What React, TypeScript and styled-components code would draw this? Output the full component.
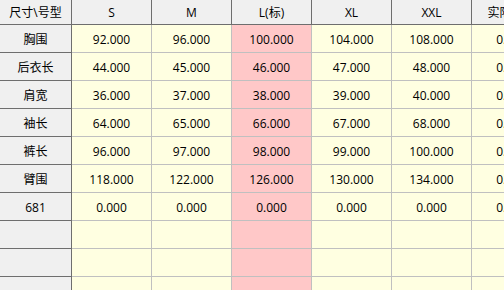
import React from "react";
import styled, { createGlobalStyle } from "styled-components";

const Global = createGlobalStyle`
  html, body { margin: 0; padding: 0; background: #ffffff; overflow: hidden; }
  body { font-family: "Open Sans", "Noto Sans CJK SC", sans-serif; }
`;

const Grid = styled.div`
  display: grid;
  grid-template-columns: 72px repeat(6, 80px);
  grid-auto-rows: 28px;
  grid-template-rows: 25px;
  width: 552px;
  font-size: 12px;
  color: #000;
`;

const Cell = styled.div<{ $kind: "corner" | "head" | "rowhead" | "data"; $std?: boolean }>`
  box-sizing: border-box;
  display: flex;
  align-items: center;
  justify-content: center;
  white-space: nowrap;
  overflow: hidden;
  background: ${(p) =>
    p.$kind === "data" ? (p.$std ? "#ffc8c8" : "#ffffe1") : "#f0f0f0"};
  border-right: 1px solid
    ${(p) => (p.$kind === "data" ? "#c0c0c0" : "#6e6e6e")};
  border-bottom: 1px solid
    ${(p) => (p.$kind === "data" ? "#c0c0c0" : "#6e6e6e")};
  padding-top: ${(p) => (p.$kind === "head" || p.$kind === "corner" ? "0" : "1px")};
`;

const sizes = ["S", "M", "L(标)", "XL", "XXL", "实际尺寸"];

const rows: { name: string; values: number[] }[] = [
  { name: "胸围", values: [92, 96, 100, 104, 108, 0] },
  { name: "后衣长", values: [44, 45, 46, 47, 48, 0] },
  { name: "肩宽", values: [36, 37, 38, 39, 40, 0] },
  { name: "袖长", values: [64, 65, 66, 67, 68, 0] },
  { name: "裤长", values: [96, 97, 98, 99, 100, 0] },
  { name: "臂围", values: [118, 122, 126, 130, 134, 0] },
  { name: "681", values: [0, 0, 0, 0, 0, 0] },
];

const emptyRows = 3;

export default function App() {
  return (
    <>
      <Global />
      <Grid>
        <Cell $kind="corner">尺寸\号型</Cell>
        {sizes.map((s) => (
          <Cell key={s} $kind="head">
            {s}
          </Cell>
        ))}
        {rows.map((r) => (
          <React.Fragment key={r.name}>
            <Cell $kind="rowhead">{r.name}</Cell>
            {r.values.map((v, i) => (
              <Cell key={i} $kind="data" $std={i === 2}>
                {v.toFixed(3)}
              </Cell>
            ))}
          </React.Fragment>
        ))}
        {Array.from({ length: emptyRows }).map((_, ri) => (
          <React.Fragment key={"e" + ri}>
            <Cell $kind="rowhead" />
            {sizes.map((_, i) => (
              <Cell key={i} $kind="data" $std={i === 2} />
            ))}
          </React.Fragment>
        ))}
      </Grid>
    </>
  );
}
